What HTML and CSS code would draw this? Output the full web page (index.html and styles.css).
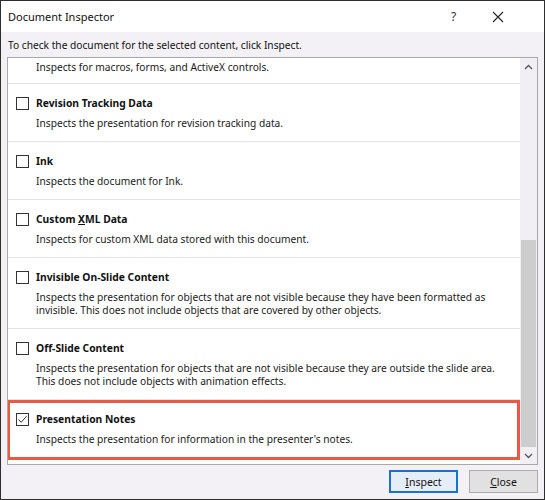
FILE: index.html
```html
<!DOCTYPE html>
<html lang="en">
<head>
    <meta charset="UTF-8">
    <title>Document Inspector</title>
    <link rel="stylesheet" href="styles.css">
</head>
<body>

    <div class="dialog">
        <!-- Title bar -->
        <div class="titlebar">
            <span class="title">Document Inspector</span>
            <span class="help">?</span>
            <span class="close-x">
                <svg width="12" height="12" viewBox="0 0 12 12"><path d="M1 1L11 11M11 1L1 11" stroke="#222" stroke-width="1.1" fill="none"/></svg>
            </span>
        </div>

        <div class="intro">To check the document for the selected content, click Inspect.</div>

        <div class="listbox">
            <div class="items">
                <div class="item partial">
                    <div class="desc">Inspects for macros, forms, and ActiveX controls.</div>
                </div>

                <div class="item">
                    <div class="head"><span class="check"></span><span>Revision Tracking Data</span></div>
                    <div class="desc">Inspects the presentation for revision tracking data.</div>
                </div>

                <div class="item">
                    <div class="head"><span class="check"></span><span>Ink</span></div>
                    <div class="desc">Inspects the document for Ink.</div>
                </div>

                <div class="item">
                    <div class="head"><span class="check"></span><span>Custom <u>X</u>ML Data</span></div>
                    <div class="desc">Inspects for custom XML data stored with this document.</div>
                </div>

                <div class="item">
                    <div class="head"><span class="check"></span><span>Invisible On-Slide Content</span></div>
                    <div class="desc">Inspects the presentation for objects that are not visible because they have been formatted as<br>invisible. This does not include objects that are covered by other objects.</div>
                </div>

                <div class="item">
                    <div class="head"><span class="check"></span><span>Off-Slide Content</span></div>
                    <div class="desc">Inspects the presentation for objects that are not visible because they are outside the slide area.<br>This does not include objects with animation effects.</div>
                </div>

                <div class="item highlight">
                    <div class="head">
                        <span class="check checked">
                            <svg width="11" height="11" viewBox="0 0 11 11"><path d="M1.5 5.5L4.2 8.3L9.6 2.2" stroke="#333" stroke-width="1" fill="none"/></svg>
                        </span><span>Presentation Notes</span>
                    </div>
                    <div class="desc">Inspects the presentation for information in the presenter's notes.</div>
                </div>
            </div>

            <!-- Scrollbar -->
            <div class="scrollbar">
                <div class="arrow">
                    <svg width="9" height="6" viewBox="0 0 9 6"><path d="M1 5L4.5 1.5L8 5" stroke="#555" stroke-width="1.3" fill="none"/></svg>
                </div>
                <div class="track"><div class="thumb"></div></div>
                <div class="arrow">
                    <svg width="9" height="6" viewBox="0 0 9 6"><path d="M1 1L4.5 4.5L8 1" stroke="#555" stroke-width="1.3" fill="none"/></svg>
                </div>
            </div>
        </div>

        <div class="footer">
            <button class="btn primary"><u>I</u>nspect</button>
            <button class="btn"><u>C</u>lose</button>
        </div>
    </div>

</body>
</html>
```

FILE: styles.css
```css
/* Global */
body {
    margin: 0;
    font-family: "Noto Sans", "Open Sans", sans-serif;
    color: #111;
}

/* Dialog window */
.dialog {
    width: 545px;
    height: 500px;
    box-sizing: border-box;
    border: 1px solid #2e2e2e;
    background-color: #f3f1f5;
    display: flex;
    flex-direction: column;
}

.titlebar {
    height: 31px;
    background-color: #fff;
    display: flex;
    align-items: center;
    padding: 0 32px 0 7px;
}

.title {
    flex: 1;
    font-size: 11px;
}

.help {
    font-size: 12px;
    width: 33px;
    color: #333;
}

.close-x {
    width: 28px;
    display: flex;
    justify-content: center;
}

.intro {
    font-size: 10.2px;
    padding: 6px 7px 5px;
    line-height: 14px;
}

/* List box */
.listbox {
    margin: 0 6px;
    height: 406px;
    border: 1px solid #a9a9a9;
    background-color: #fff;
    display: flex;
}

.items {
    flex: 1;
    overflow: hidden;
}

.item {
    padding: 11px 0 11px 8px;
    border-bottom: 1px solid #e3e3e3;
}

.item.partial {
    padding-top: 3px;
    padding-bottom: 9px;
}

.item.highlight {
    border-bottom: none;
    height: 60px;
    box-sizing: border-box;
    box-shadow: inset 0 0 0 3px #ef5646;
    margin-left: -1px;
    padding-left: 9px;
}

.head {
    display: flex;
    align-items: center;
    font-size: 10.3px;
    font-weight: bold;
    line-height: 16px;
    margin-bottom: 6px;
}

.check {
    width: 13px;
    height: 13px;
    box-sizing: border-box;
    border: 1px solid #333;
    background-color: #fff;
    margin-right: 7px;
    display: flex;
    align-items: center;
    justify-content: center;
}

.desc {
    font-size: 10.2px;
    line-height: 13px;
    padding-left: 20px;
    color: #1a1a1a;
    white-space: nowrap;
}

/* Scrollbar */
.scrollbar {
    width: 17px;
    background-color: #f1eff3;
    display: flex;
    flex-direction: column;
}

.arrow {
    height: 17px;
    display: flex;
    align-items: center;
    justify-content: center;
}

.track {
    flex: 1;
    display: flex;
    flex-direction: column;
    justify-content: flex-end;
    padding: 0 1px;
}

.thumb {
    height: 207px;
    background-color: #cdcdcd;
}

/* Buttons */
.footer {
    display: flex;
    justify-content: flex-end;
    gap: 11px;
    padding: 5px 6px 0;
}

.btn {
    width: 69px;
    height: 23px;
    font-family: inherit;
    font-size: 10.5px;
    color: #111;
    background-color: #e1e1e1;
    border: 1px solid #adadad;
    padding: 0;
}

.btn.primary {
    background-color: #e5eef7;
    border: 2px solid #1a73c8;
}
```
